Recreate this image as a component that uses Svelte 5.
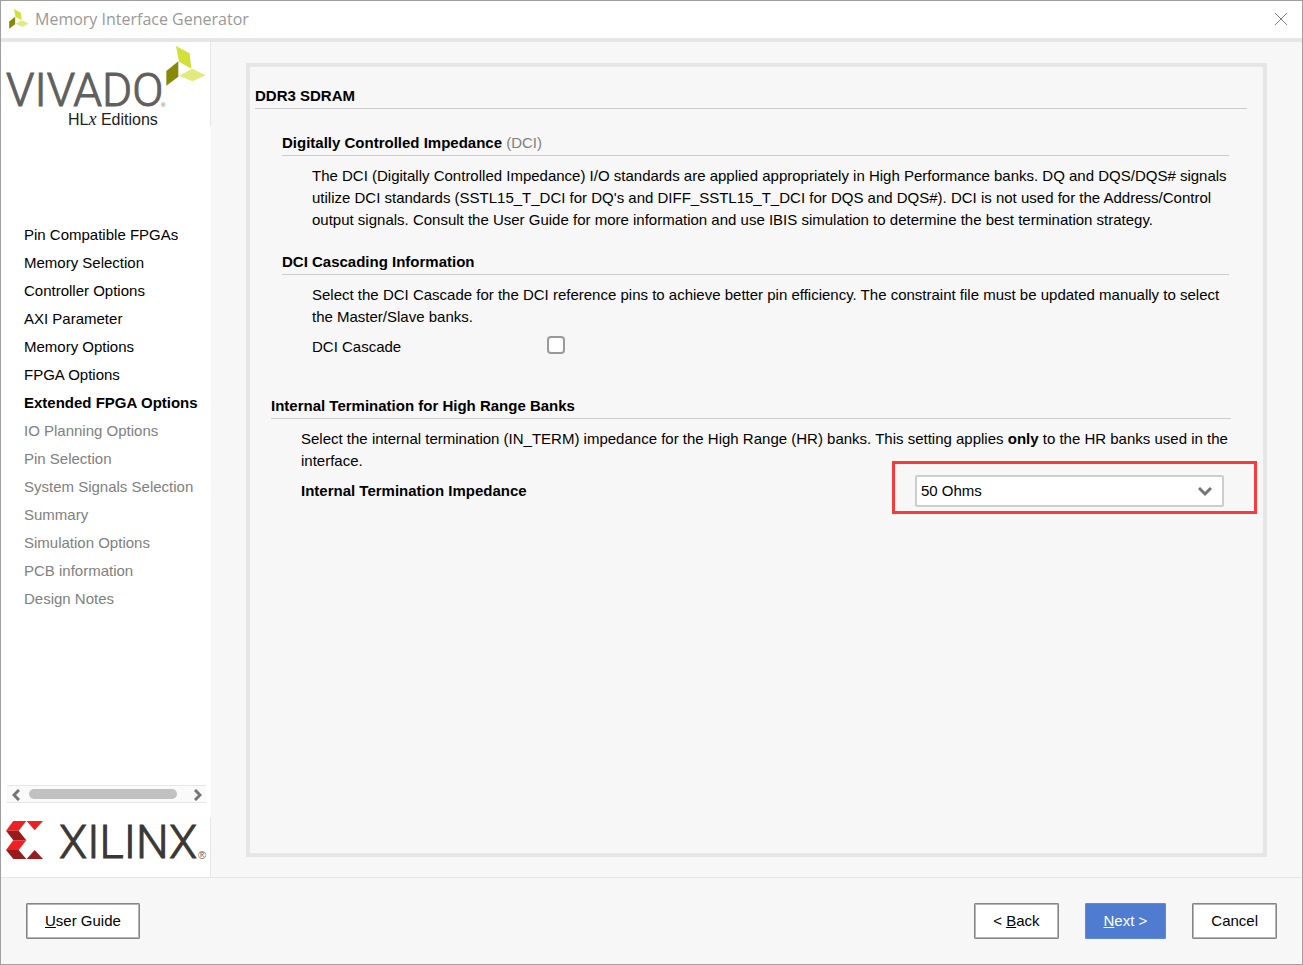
<script lang="ts">

    interface Step {
        label: string;
        state: "done" | "current" | "pending";
    }

    let steps: Step[] = [
        {label: "Pin Compatible FPGAs", state: "done"},
        {label: "Memory Selection", state: "done"},
        {label: "Controller Options", state: "done"},
        {label: "AXI Parameter", state: "done"},
        {label: "Memory Options", state: "done"},
        {label: "FPGA Options", state: "done"},
        {label: "Extended FPGA Options", state: "current"},
        {label: "IO Planning Options", state: "pending"},
        {label: "Pin Selection", state: "pending"},
        {label: "System Signals Selection", state: "pending"},
        {label: "Summary", state: "pending"},
        {label: "Simulation Options", state: "pending"},
        {label: "PCB information", state: "pending"},
        {label: "Design Notes", state: "pending"}];

    let dciCascade = false;
    let impedance = "50 Ohms";
    let impedances = ["40 Ohms", "50 Ohms", "60 Ohms"];
</script>

{#snippet vivadoMark(x: number, y: number, size: number)}
    <svg {x} {y} width={size} height={size} viewBox="498 138 120 120">
        <polygon points="528,138 569,160 574,206 537,185" fill="#d3e03a" />
        <polygon points="499,213 535,184 535,230 499,257" fill="#858a0a" />
        <polygon points="537,227 577,206 617,226 577,244" fill="#e3ea7c" />
    </svg>
{/snippet}

<div class="window">
    <header>
        {@render vivadoMark(0, 0, 20)}
        <h1>Memory Interface Generator</h1>
        <button class="close" aria-label="Close">
            <svg width="12" height="12" viewBox="0 0 12 12">
                <path d="M0 0L12 12M12 0L0 12" stroke="#808080" fill="none" />
            </svg>
        </button>
    </header>

    <div class="body">
        <aside>
            <svg class="logo" width="209" height="84" viewBox="0 0 209 84">
                <text class="vivado" x="5" y="64">VIVADO</text>
                <text class="reg" x="160" y="65">®</text>
                <text class="editions" x="67" y="83">HL<tspan class="x">x</tspan> Editions</text>
                {@render vivadoMark(165, 4, 40)}
            </svg>

            <nav>
                {#each steps as {label, state}}
                    <a href="#step" class={state} aria-current={state === "current" ? "step" : undefined}>{label}</a>
                {/each}
            </nav>

            <div class="scrollbar">
                <button aria-label="Scroll left">
                    <svg width="8" height="12" viewBox="0 0 8 12">
                        <path d="M7 1L2 6L7 11" />
                    </svg>
                </button>
                <div class="track"><div class="thumb"></div></div>
                <button aria-label="Scroll right">
                    <svg width="8" height="12" viewBox="0 0 8 12">
                        <path d="M1 1L6 6L1 11" />
                    </svg>
                </button>
            </div>

            <svg class="logo" width="209" height="60" viewBox="0 0 209 60">
                <svg x="5" y="4" width="37" height="38" viewBox="19 153 111 114">
                    <polygon points="41,153 80,153 57,182 19,182" fill="#ed2024" />
                    <polygon points="19,182 57,182 80,211 41,211" fill="#981b1e" />
                    <polygon points="41,211 80,211 57,240 19,240" fill="#ed2024" />
                    <polygon points="19,240 57,240 80,267 41,267" fill="#981b1e" />
                    <polygon points="81,153 130,153 105,181" fill="#ed2024" />
                    <polygon points="81,267 105,240 130,267" fill="#981b1e" />
                </svg>
                <text class="xilinx" x="58" y="41">XILINX</text>
                <text class="reg-dark" x="197" y="42">®</text>
            </svg>
        </aside>

        <main>
            <div class="panel">
                <h2>DDR3 SDRAM</h2>

                <section class="dci">
                    <h3>Digitally Controlled Impedance <span>(DCI)</span></h3>
                    <p>
                        The DCI (Digitally Controlled Impedance) I/O standards are applied appropriately in High Performance banks. DQ and DQS/DQS# signals
                        utilize DCI standards (SSTL15_T_DCI for DQ's and DIFF_SSTL15_T_DCI for DQS and DQS#). DCI is not used for the Address/Control
                        output signals. Consult the User Guide for more information and use IBIS simulation to determine the best termination strategy.
                    </p>
                </section>

                <section class="cascade">
                    <h3>DCI Cascading Information</h3>
                    <p>
                        Select the DCI Cascade for the DCI reference pins to achieve better pin efficiency. The constraint file must be updated manually to select
                        the Master/Slave banks.
                    </p>
                    <div class="check-row">
                        <label for="dci-cascade">DCI Cascade</label>
                        <input id="dci-cascade" type="checkbox" bind:checked={dciCascade} />
                    </div>
                </section>

                <section class="termination">
                    <h3>Internal Termination for High Range Banks</h3>
                    <p>
                        Select the internal termination (IN_TERM) impedance for the High Range (HR) banks. This setting applies <b>only</b> to the HR banks used in the
                        interface.
                    </p>
                    <div class="select-row">
                        <label for="impedance">Internal Termination Impedance</label>
                        <div class="select">
                            <select id="impedance" bind:value={impedance}>
                                {#each impedances as value}
                                    <option {value}>{value}</option>
                                {/each}
                            </select>
                            <svg class="arrow" width="14" height="10" viewBox="0 0 14 10">
                                <path d="M1 1L7 7L13 1" />
                            </svg>
                            <div class="highlight"></div>
                        </div>
                    </div>
                </section>
            </div>
        </main>
    </div>

    <footer>
        <button><u>U</u>ser Guide</button>
        <div class="actions">
            <button>&lt; <u>B</u>ack</button>
            <button class="primary"><u>N</u>ext &gt;</button>
            <button>Cancel</button>
        </div>
    </footer>
</div>

<style>
    :global(body) {
        margin: 0;
        background: #f7f7f7;
    }

    .window {
        display: flex;
        flex-direction: column;
        box-sizing: border-box;
        min-height: 100vh;
        border: 1px solid #a0a0a0;
        background: #f7f7f7;
        color: #000;
        font-family: "Liberation Sans", Arial, sans-serif;
        font-size: 15px;
        line-height: 22px;
    }

    button, select, input {
        box-sizing: border-box;
        margin: 0;
        font: inherit;
        color: inherit;
    }

    header {
        display: flex;
        align-items: center;
        gap: 6px;
        height: 36px;
        padding: 0 15px 1px 8px;
        border-bottom: 4px solid #e6e6e6;
        background: #fff;
    }

    h1 {
        flex: 1;
        margin: 0;
        color: #999;
        font-family: "Open Sans", "Noto Sans", sans-serif;
        font-size: 16px;
        font-weight: 400;
    }

    .close {
        display: flex;
        padding: 0;
        border: none;
        background: none;
    }

    .body {
        flex: 1;
        display: flex;
        border-bottom: 1px solid #e6e6e6;
    }

    aside {
        display: flex;
        flex-direction: column;
        width: 210px;
        background: #fff;
    }

    .logo {
        display: block;
        overflow: visible;
        border-right: 1px solid #e6e6e6;
    }

    .vivado, .xilinx {
        font-family: Roboto, "Open Sans", sans-serif;
        font-weight: 300;
        font-size: 46px;
        fill: #5f5f5f;
        stroke: #5f5f5f;
        stroke-width: 1;
    }

    .xilinx {
        fill: #393836;
        stroke: #393836;
    }

    .reg, .reg-dark {
        font-size: 6px;
        fill: #5f5f5f;
    }

    .reg-dark {
        font-size: 11px;
    }

    .editions {
        font-family: "Liberation Sans", Arial, sans-serif;
        font-size: 16px;
        fill: #222;
    }

    .editions .x {
        font-family: "Liberation Serif", serif;
        font-size: 18px;
        font-style: italic;
    }

    nav {
        flex: 1;
        display: flex;
        flex-direction: column;
        padding: 95px 0 0 23px;
    }

    nav a {
        color: #000;
        line-height: 28px;
        text-decoration: none;
        white-space: nowrap;
    }

    nav a.current {
        font-weight: 700;
    }

    nav a.pending {
        color: #808080;
    }

    .scrollbar {
        display: flex;
        align-items: center;
        height: 16px;
        margin: 0 5px 14px 6px;
        border-top: 1px solid #e6e6e6;
        border-bottom: 1px solid #e6e6e6;
        background: #fafafa;
    }

    .scrollbar button {
        display: flex;
        padding: 2px 4px 0 5px;
        border: none;
        background: none;
    }

    .scrollbar path, .arrow path {
        fill: none;
        stroke: #757575;
        stroke-width: 3;
    }

    .track {
        flex: 1;
        padding: 0 12px 0 5px;
    }

    .thumb {
        height: 10px;
        border-radius: 5px;
        background: #c1c1c1;
    }

    main {
        flex: 1;
        display: flex;
        padding: 21px 35px 20px 35px;
    }

    .panel {
        flex: 1;
        padding: 18px 16px 18px 5px;
        border: 4px solid #e6e6e6;
    }

    h2, h3 {
        margin: 0;
        padding-bottom: 1px;
        border-bottom: 1px solid #cdcdcd;
        font-size: 15px;
        font-weight: 700;
    }

    h3 span {
        color: #808080;
        font-weight: 400;
    }

    p {
        margin: 9px 0 0;
        padding-left: 30px;
    }

    .dci {
        margin: 23px 18px 0 27px;
    }

    .cascade {
        margin: 20px 18px 0 27px;
    }

    .termination {
        margin: 37px 16px 0 16px;
    }

    .check-row {
        display: grid;
        grid-template-columns: 235px 18px;
        margin-top: 8px;
        padding-left: 30px;
    }

    input[type="checkbox"] {
        appearance: none;
        width: 18px;
        height: 18px;
        border: 2px solid #999;
        border-radius: 4px;
        background: #fff;
    }

    input[type="checkbox"]:checked {
        background: #4f7cd1;
    }

    .select-row {
        display: grid;
        grid-template-columns: 1fr 309px;
        align-items: center;
        margin-top: 3px;
        padding: 0 7px 0 30px;
        font-weight: 700;
    }

    .select {
        position: relative;
        font-weight: 400;
    }

    select {
        appearance: none;
        display: block;
        width: 100%;
        height: 32px;
        padding: 0 30px 0 4px;
        border: 2px solid #cdcdcd;
        border-radius: 2px;
        background: #fff;
    }

    .arrow {
        position: absolute;
        top: 12px;
        right: 12px;
        pointer-events: none;
    }

    .highlight {
        position: absolute;
        inset: -14px -33px -7px -23px;
        border: 3px solid #fa3a3a;
        pointer-events: none;
    }

    footer {
        display: flex;
        justify-content: space-between;
        padding: 25px;
    }

    .actions {
        display: flex;
        gap: 26px;
    }

    footer button {
        height: 36px;
        padding: 0 18px;
        border: 1px solid #858585;
        border-radius: 1px;
        box-shadow: inset 0 0 0 1px #b4b4b4;
        background: #fff;
    }

    footer button.primary {
        border-color: #6089d6;
        box-shadow: none;
        background: #4f7cd1;
        color: #fff;
    }
</style>
